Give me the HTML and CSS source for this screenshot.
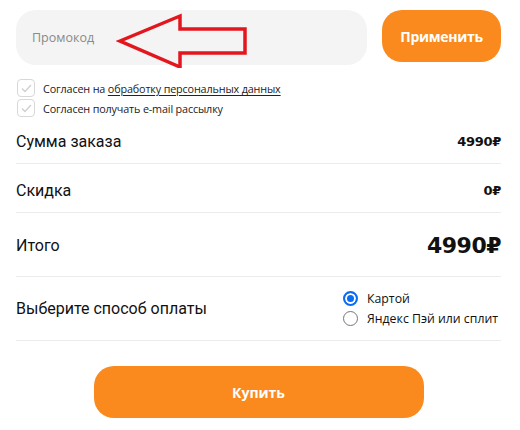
FILE: index.html
```html
<!DOCTYPE html>
<html lang="ru">
<head>
<meta charset="utf-8">
<link rel="stylesheet" href="styles.css">
</head>
<body>
<div class="page">
  <div class="promo">
    <div class="promo-input">
      <span class="placeholder">Промокод</span>
      <svg class="arrow" width="140" height="56" viewBox="0 0 140 56">
        <polygon points="4,29 64,4 64,17 129,17 129,41 64,41 64,55" fill="none" stroke="#e3161e" stroke-width="3.5" stroke-linejoin="miter"/>
      </svg>
    </div>
    <button class="btn apply">Применить</button>
  </div>

  <div class="checks">
    <label class="check">
      <span class="box"><svg width="11" height="9" viewBox="0 0 11 9"><path d="M1 4.5 L4 7.5 L10 1" fill="none" stroke="#cfcfcf" stroke-width="1.3"/></svg></span>
      <span>Согласен на <u>обработку персональных данных</u></span>
    </label>
    <label class="check">
      <span class="box"><svg width="11" height="9" viewBox="0 0 11 9"><path d="M1 4.5 L4 7.5 L10 1" fill="none" stroke="#cfcfcf" stroke-width="1.3"/></svg></span>
      <span>Согласен получать e-mail рассылку</span>
    </label>
  </div>

  <div class="row r-sum">
    <span class="label">Сумма заказа</span>
    <span class="val">4990₽</span>
  </div>
  <div class="row r-disc">
    <span class="label">Скидка</span>
    <span class="val">0₽</span>
  </div>
  <div class="row r-total">
    <span class="label">Итого</span>
    <span class="val big">4990₽</span>
  </div>
  <div class="row r-pay">
    <span class="label">Выберите способ оплаты</span>
    <div class="radios">
      <label class="radio"><span class="dot on"></span>Картой</label>
      <label class="radio"><span class="dot"></span>Яндекс Пэй или сплит</label>
    </div>
  </div>

  <div class="buy-wrap">
    <button class="btn buy">Купить</button>
  </div>
</div>
</body>
</html>
```

FILE: styles.css
```css
* { box-sizing: border-box; }
body { margin: 0; background: #fff; font-family: Roboto, "Noto Sans", sans-serif; color: #111; }
.page { padding: 10px 19px 0 16px; width: 520px; }

.promo { display: flex; gap: 15px; align-items: flex-start; }
.promo-input {
  position: relative;
  width: 351px; height: 55px;
  background: #f4f4f4; border-radius: 20px;
  display: flex; align-items: center; padding-left: 16px;
}
.placeholder { font-family: "Open Sans", "Noto Sans", sans-serif; font-size: 12.5px; color: #8a8a8a; }
.arrow { position: absolute; left: 100px; top: 2px; }

.btn {
  border: none; background: #fb8a1e; color: #fff;
  font-family: "Open Sans", "Noto Sans", sans-serif; font-weight: 700;
  cursor: pointer;
}
.apply { width: 119px; height: 52px; border-radius: 20px; font-size: 14px; letter-spacing: -0.3px; }

.checks { margin-top: 14px; display: flex; flex-direction: column; gap: 2px; }
.check {
  display: flex; align-items: center; gap: 8px;
  font-family: "Open Sans", "Noto Sans", sans-serif; font-size: 10.8px; letter-spacing: -0.15px; color: #222; height: 18px;
}
.check u { text-decoration-thickness: 1px; text-underline-offset: 2px; }
.box {
  width: 18px; height: 18px; margin-left: 1px;
  border: 1px solid #d8d8d8; border-radius: 4px;
  display: flex; align-items: center; justify-content: center;
}

.row { display: flex; align-items: center; justify-content: space-between; border-bottom: 1px solid #ececec; }
.label { font-size: 16px; color: #111; }
.val { font-family: "DejaVu Sans", sans-serif; font-weight: 700; font-size: 13px; letter-spacing: -0.3px; }
.val.big { font-size: 22px; font-weight: 900; letter-spacing: -0.5px; }
.r-sum { height: 47px; padding-top: 3px; }
.r-disc { height: 49px; padding-top: 4px; }
.r-total { height: 64px; padding-top: 2px; }
.r-pay { height: 64px; }

.radios { display: flex; flex-direction: column; gap: 4px; margin-right: 0; width: 158px; }
.radio {
  display: flex; align-items: center; gap: 9px;
  font-family: "Open Sans", "Noto Sans", sans-serif; font-size: 12.3px; color: #111; height: 16px; white-space: nowrap;
}
.dot { width: 15px; height: 15px; border-radius: 50%; border: 1px solid #767676; background: #fff; flex: none; }
.dot.on { border: 2px solid #0a6cf5; box-shadow: inset 0 0 0 2px #fff; background: #0a6cf5; }

.buy-wrap { display: flex; justify-content: center; padding-top: 25px; }
.buy { width: 330px; height: 52px; border-radius: 20px; font-size: 14px; }
```
